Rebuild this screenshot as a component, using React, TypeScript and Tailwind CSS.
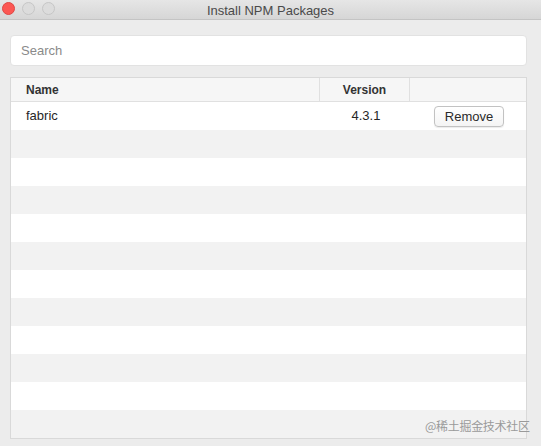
import React from "react";

const rows = [
  { name: "fabric", version: "4.3.1" },
];

const TOTAL_ROWS = 12;

export default function App() {
  const filled = Array.from({ length: TOTAL_ROWS }, (_, i) => rows[i] ?? null);

  return (
    <div
      className="relative w-[541px] h-[446px] bg-[#ececec] flex flex-col overflow-hidden text-[#262626]"
      style={{ fontFamily: '"Helvetica Neue", "Liberation Sans", Arial, sans-serif' }}
    >
      {/* Title bar */}
      <div className="relative h-[20px] shrink-0 bg-gradient-to-b from-[#e6e6e6] to-[#d6d6d6] border-b border-[#c4c4c4] flex items-center justify-center">
        <div className="absolute left-[2px] top-[2px] flex items-center gap-[7px]">
          <span className="w-[13px] h-[13px] rounded-full bg-[#fc5753] border border-[#df4744]" />
          <span className="w-[13px] h-[13px] rounded-full bg-[#dcdcdc] border border-[#c6c6c6]" />
          <span className="w-[13px] h-[13px] rounded-full bg-[#dcdcdc] border border-[#c6c6c6]" />
        </div>
        <span className="text-[13px] text-[#4a4a4a] leading-none mt-[1px]">Install NPM Packages</span>
      </div>

      <div className="flex-1 px-[10px] pt-[15px] flex flex-col">
        {/* Search */}
        <div className="w-[517px] h-[31px] bg-white rounded-[4px] border border-[#e2e2e2] flex items-center px-[10px]">
          <span className="text-[13px] text-[#8a8a8a] mt-[1px]">Search</span>
        </div>

        {/* Table */}
        <div className="mt-[11px] w-[517px] bg-white border border-[#d9d9d9] flex flex-col">
          <div className="h-[24px] flex bg-[#f6f6f6] border-b border-[#e0e0e0] text-[12px] font-bold text-[#333]">
            <div className="w-[309px] pl-[15px] flex items-center border-r border-[#e0e0e0]">Name</div>
            <div className="w-[90px] flex items-center justify-center border-r border-[#e0e0e0]">Version</div>
            <div className="flex-1" />
          </div>
          {filled.map((row, i) => (
            <div
              key={i}
              className={`h-[28px] flex items-center text-[13px] ${i % 2 === 0 ? "bg-white" : "bg-[#f2f2f2]"}`}
            >
              {row && (
                <>
                  <div className="w-[309px] pl-[15px] -mt-[1px]">{row.name}</div>
                  <div className="w-[90px] text-center pl-[2px] -mt-[1px]">{row.version}</div>
                  <div className="flex-1 flex justify-center pl-[2px]">
                    <button className="h-[21px] w-[70px] rounded-[4px] border border-[#c2c2c2] bg-gradient-to-b from-white to-[#f4f4f4] shadow-[0_1px_1px_rgba(0,0,0,0.08)] text-[13px] text-[#2a2a2a] leading-none">
                      Remove
                    </button>
                  </div>
                </>
              )}
            </div>
          ))}
        </div>
      </div>

      <span
        className="absolute left-[425px] top-[417px] text-[12px] text-[#9a9a9a] tracking-[-0.3px]"
        style={{ fontFamily: '"Noto Sans CJK SC", sans-serif' }}
      >
        @稀土掘金技术社区
      </span>
    </div>
  );
}
